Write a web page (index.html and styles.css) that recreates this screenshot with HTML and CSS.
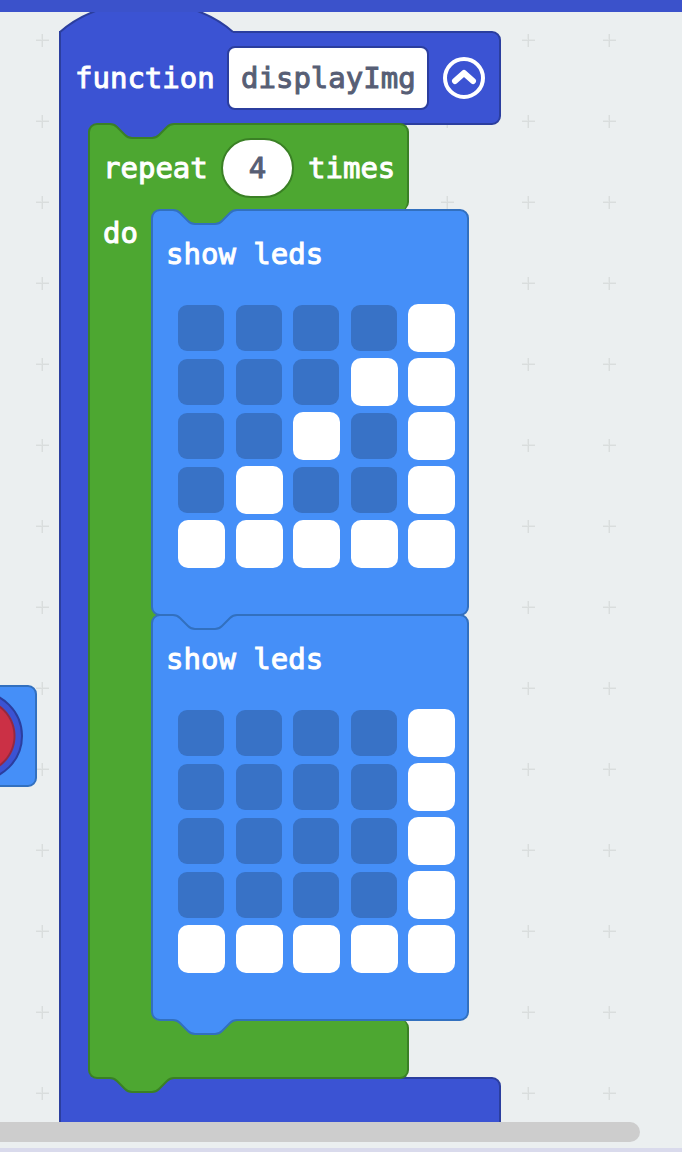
FILE: index.html
```
<!DOCTYPE html>
<html lang="en">
<head>
<meta charset="utf-8">
<title>Block editor</title>
<link rel="stylesheet" href="styles.css">
</head>
<body>
<svg class="defs" aria-hidden="true">
  <symbol id="tab" viewBox="0 0 64 18" overflow="visible">
    <path class="tab-fill" d="M0 0V1c3 0 5 1 7 3l8 8c2 2 4 3 7 3h20c3 0 5-1 7-3l8-8c2-2 4-3 7-3V0z"/>
    <path class="tab-line" d="M0 1c3 0 5 1 7 3l8 8c2 2 4 3 7 3h20c3 0 5-1 7-3l8-8c2-2 4-3 7-3"/>
  </symbol>
</svg>
<header class="topbar"></header>
<main class="workspace">
  <svg class="grid" aria-hidden="true">
    <defs>
      <pattern id="plus" width="81" height="81" x="2" y="-12" patternUnits="userSpaceOnUse">
        <path class="grid-soft" d="M34 39h13v2h-13zM39 34h2v13h-2z"/>
        <path d="M34 40h13v1h-13zM40 34h1v13h-1z"/>
      </pattern>
    </defs>
    <rect width="100%" height="100%" fill="url(#plus)"/>
  </svg>

  <section class="picker"><button class="picker-dot" aria-label="Button"></button></section>

  <section class="block function">
    <svg class="hat" viewBox="0 0 176 36" aria-hidden="true">
      <path class="hat-fill" d="M1 32c45-40 128-40 173 0v4H1z"/>
      <path class="hat-line" d="M1 36v-4c45-40 128-40 173 0"/>
    </svg>
    <div class="head function-head">
      <label for="fname">function</label>
      <input id="fname" class="name" type="text" value="displayImg">
      <button class="collapse" aria-label="Collapse">
        <svg viewBox="0 0 42 42" aria-hidden="true"><circle cx="21" cy="21" r="19"/><path d="M12 24l9-8 9 8"/></svg>
      </button>
    </div>
    <div class="row">
      <div class="spine"></div>
      <section class="block repeat">
        <svg class="tab tab-function"><use href="#tab"/></svg>
        <div class="head repeat-head">
          <label for="count">repeat</label>
          <input id="count" class="count" type="text" value="4">
          <span>times</span>
        </div>
        <div class="row">
          <div class="spine">do</div>
          <div class="stack">
            <section class="leds-block">
              <svg class="tab tab-repeat"><use href="#tab"/></svg>
              <div>show leds</div>
              <div class="leds">
                <input type="checkbox" aria-label="LED 1,1"><input type="checkbox" aria-label="LED 1,2"><input type="checkbox" aria-label="LED 1,3"><input type="checkbox" aria-label="LED 1,4"><input type="checkbox" aria-label="LED 1,5" checked>
                <input type="checkbox" aria-label="LED 2,1"><input type="checkbox" aria-label="LED 2,2"><input type="checkbox" aria-label="LED 2,3"><input type="checkbox" aria-label="LED 2,4" checked><input type="checkbox" aria-label="LED 2,5" checked>
                <input type="checkbox" aria-label="LED 3,1"><input type="checkbox" aria-label="LED 3,2"><input type="checkbox" aria-label="LED 3,3" checked><input type="checkbox" aria-label="LED 3,4"><input type="checkbox" aria-label="LED 3,5" checked>
                <input type="checkbox" aria-label="LED 4,1"><input type="checkbox" aria-label="LED 4,2" checked><input type="checkbox" aria-label="LED 4,3"><input type="checkbox" aria-label="LED 4,4"><input type="checkbox" aria-label="LED 4,5" checked>
                <input type="checkbox" aria-label="LED 5,1" checked><input type="checkbox" aria-label="LED 5,2" checked><input type="checkbox" aria-label="LED 5,3" checked><input type="checkbox" aria-label="LED 5,4" checked><input type="checkbox" aria-label="LED 5,5" checked>
              </div>
            </section>
            <section class="leds-block">
              <svg class="tab tab-leds"><use href="#tab"/></svg>
              <div>show leds</div>
              <div class="leds">
                <input type="checkbox" aria-label="LED 1,1"><input type="checkbox" aria-label="LED 1,2"><input type="checkbox" aria-label="LED 1,3"><input type="checkbox" aria-label="LED 1,4"><input type="checkbox" aria-label="LED 1,5" checked>
                <input type="checkbox" aria-label="LED 2,1"><input type="checkbox" aria-label="LED 2,2"><input type="checkbox" aria-label="LED 2,3"><input type="checkbox" aria-label="LED 2,4"><input type="checkbox" aria-label="LED 2,5" checked>
                <input type="checkbox" aria-label="LED 3,1"><input type="checkbox" aria-label="LED 3,2"><input type="checkbox" aria-label="LED 3,3"><input type="checkbox" aria-label="LED 3,4"><input type="checkbox" aria-label="LED 3,5" checked>
                <input type="checkbox" aria-label="LED 4,1"><input type="checkbox" aria-label="LED 4,2"><input type="checkbox" aria-label="LED 4,3"><input type="checkbox" aria-label="LED 4,4"><input type="checkbox" aria-label="LED 4,5" checked>
                <input type="checkbox" aria-label="LED 5,1" checked><input type="checkbox" aria-label="LED 5,2" checked><input type="checkbox" aria-label="LED 5,3" checked><input type="checkbox" aria-label="LED 5,4" checked><input type="checkbox" aria-label="LED 5,5" checked>
              </div>
              <svg class="tab tab-leds tab-bottom"><use href="#tab"/></svg>
            </section>
          </div>
        </div>
        <div class="foot repeat-foot"></div>
        <svg class="tab tab-green tab-bottom"><use href="#tab"/></svg>
      </section>
    </div>
    <div class="foot function-foot"></div>
  </section>
</main>
<div class="scroll"><div class="thumb"></div></div>
<footer class="bottombar"></footer>
</body>
</html>
```
FILE: styles.css
```
* { box-sizing: border-box; }
body {
  margin: 0;
  height: 100vh;
  display: flex;
  flex-direction: column;
  overflow: hidden;
  background: #ebeff0;
  color: #fff;
  font: 29px/32px "DejaVu Sans Mono", monospace;
  -webkit-text-stroke: 1px currentColor;
}
input, button { font: inherit; margin: 0; padding: 0; }
.defs { position: absolute; width: 0; height: 0; }
.topbar { height: 12px; background: #3b52cb; }
.workspace { position: relative; flex: 1; overflow: hidden; }
.grid { position: absolute; width: 100%; height: 100%; fill: #d9dddd; }
.grid-soft { fill: #e3e7e7; }

.picker {
  position: absolute;
  left: -102px;
  top: 673px;
  width: 139px;
  height: 102px;
  padding: 4px 12px;
  display: flex;
  justify-content: flex-end;
  background: #458ff8;
  border: 2px solid #3270bf;
  border-radius: 9px;
}
.picker-dot {
  width: 90px;
  height: 90px;
  border: 2px solid #2b3e9e;
  border-radius: 50%;
  background: radial-gradient(circle, #cb3045 35px, #96283f 36px, #96283f 37px, #3b53d3 38px);
}

.block { --fill: #3b53d3; --line: #2b3e9e; }
.function { position: absolute; left: 59px; top: 19px; }
.head, .foot { background: var(--fill); border: 2px solid var(--line); }
.row { position: relative; display: flex; margin: -2px 0; }
/* The spine reaches under the rounded corners of the nested blocks. */
.spine { flex: none; margin-right: -10px; background: var(--fill); border-left: 2px solid var(--line); }
.stack { position: relative; }
.head { display: flex; align-items: center; }

.function-head {
  width: 442px;
  height: 94px;
  padding: 0 14px;
  gap: 14px;
  border-radius: 0 9px 9px 0;
}
.function-head label { width: 138px; }
.function > .row > .spine { width: 39px; }
.function-foot { width: 442px; height: 94px; border-radius: 0 9px 9px 0; }
.hat { position: absolute; left: 0; top: -31px; width: 176px; height: 36px; }
.hat-fill { fill: #3b53d3; }
.hat-line { fill: none; stroke: #2b3e9e; stroke-width: 2px; }
.name {
  width: 202px;
  height: 64px;
  padding: 0 12px;
  border: 2px solid #2b3e9e;
  border-radius: 8px;
  color: #575e75;
  background: #fff;
}
.collapse { width: 42px; height: 42px; border: 0; background: none; }
.collapse svg { display: block; fill: none; stroke: #fff; stroke-width: 4px; }
.collapse path { stroke-width: 6px; stroke-linecap: round; stroke-linejoin: round; }

.repeat { --fill: #4da731; --line: #3a8025; position: relative; width: 321px; }
.repeat-head {
  height: 88px;
  padding: 0 13px;
  gap: 14px;
  border-bottom: 0;
  border-radius: 9px 9px 9px 0;
}
.repeat-head label { width: 104px; }
.count {
  width: 73px;
  height: 60px;
  border: 2px solid var(--line);
  border-radius: 30px;
  text-align: center;
  color: #575e75;
  background: #fff;
}
.repeat > .row > .spine { width: 73px; padding: 8px 0 0 13px; }
.repeat-foot { height: 60px; border-top: 0; border-radius: 0 9px 9px 9px; }

.leds-block {
  position: relative;
  width: 318px;
  padding: 27px 13px 46px;
  background: #458ff8;
  border: 2px solid #3270bf;
  border-radius: 9px;
}
.leds-block + .leds-block { margin-top: -2px; }
.leds {
  display: grid;
  grid-template-columns: repeat(5, 47px);
  justify-content: space-between;
  row-gap: 6px;
  margin: 34px 0 0 12px;
  width: 277px;
}
.leds input {
  appearance: none;
  width: 46px;
  height: 46px;
  margin: 1px 0;
  border-radius: 9px;
  background: #3872c6;
}
.leds input:checked { width: 47px; height: 48px; margin: 0; border-radius: 10px; background: #fff; }

.tab { position: absolute; left: 22px; top: 0; width: 64px; height: 18px; overflow: visible; }
.leds-block > .tab { left: 20px; top: -2px; }
.tab-bottom, .leds-block > .tab-bottom { top: auto; bottom: -16px; }
.leds-block > .tab-bottom { bottom: -18px; }
.tab-fill { fill: var(--tab); }
.tab-line { fill: none; stroke: var(--edge); stroke-width: 2px; }
.tab-function { --tab: #3b53d3; --edge: #3a8025; }
.tab-repeat { --tab: #4da731; --edge: #3270bf; }
.tab-leds { --tab: #458ff8; --edge: #3270bf; }
.tab-green { --tab: #4da731; --edge: #3a8025; }

.scroll { height: 26px; padding-right: 42px; }
.thumb { height: 20px; background: #cdcdcd; border-radius: 0 10px 10px 0; }
.bottombar { height: 4px; background: #d9daec; }
```
